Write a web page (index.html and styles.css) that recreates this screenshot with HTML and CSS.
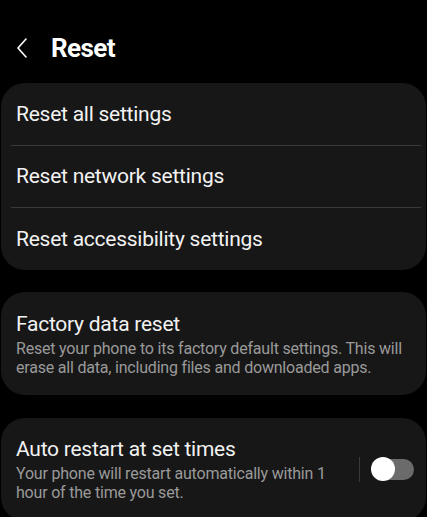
FILE: index.html
```html
<!DOCTYPE html>
<html>
<head>
<meta charset="utf-8">
<link rel="stylesheet" href="styles.css">
</head>
<body>
<header class="topbar">
  <svg class="back" width="12" height="20" viewBox="0 0 12 20"><path d="M10 1 L2 10 L10 19" fill="none" stroke="#fff" stroke-width="1.6" stroke-linecap="round" stroke-linejoin="round"/></svg>
  <h1 class="title">Reset</h1>
</header>
<section class="card">
  <div class="row simple">Reset all settings</div>
  <div class="divider"></div>
  <div class="row simple">Reset network settings</div>
  <div class="divider"></div>
  <div class="row simple">Reset accessibility settings</div>
</section>
<section class="card">
  <div class="row detail">
    <div class="row-title">Factory data reset</div>
    <div class="row-sub">Reset your phone to its factory default settings. This will erase all data, including files and downloaded apps.</div>
  </div>
</section>
<section class="card last">
  <div class="row detail switch-row">
    <div class="texts">
      <div class="row-title">Auto restart at set times</div>
      <div class="row-sub">Your phone will restart automatically within 1 hour of the time you set.</div>
    </div>
    <div class="vsep"></div>
    <div class="toggle"><div class="knob"></div></div>
  </div>
</section>
</body>
</html>
```
FILE: styles.css
```css
html, body {
  margin: 0;
  padding: 0;
  background: #000;
  color: #f2f2f2;
  font-family: Roboto, "Noto Sans", sans-serif;
  overflow: hidden;
}
.topbar {
  display: flex;
  align-items: center;
  height: 83px;
  padding-left: 16px;
  box-sizing: border-box;
  padding-top: 12px;
}
.back { margin-right: 23px; }
.title {
  margin: 0;
  font-size: 26px;
  font-weight: 700;
  letter-spacing: -0.6px;
  color: #fff;
}
.card {
  background: #171717;
  border-radius: 24px;
  margin: 0 1px 22.5px;
}
.row.simple {
  font-size: 21px;
  letter-spacing: -0.25px;
  padding: 0 15px;
  height: 61.5px;
  display: flex;
  align-items: center;
}
.divider {
  height: 1px;
  background: #3a3a3a;
  margin: 0 5px 0 10px;
}
.row.detail {
  padding: 18.5px 8px 18.5px 15px;
}
.row-title {
  font-size: 21px;
  line-height: 26px;
  letter-spacing: -0.25px;
}
.row-sub {
  font-size: 16px;
  line-height: 19px;
  letter-spacing: -0.2px;
  color: #9a9a9a;
  margin-top: 2px;
}
.row.detail.switch-row {
  display: flex;
  align-items: center;
  padding-right: 12px;
}
.texts { flex: 1; }
.vsep {
  width: 1px;
  height: 25px;
  background: #3a3a3a;
  margin: 0 13px 0 8px;
}
.toggle {
  width: 41px;
  height: 21px;
  border-radius: 11px;
  background: #6b6b6b;
  position: relative;
}
.knob {
  position: absolute;
  left: -2px;
  top: -1.5px;
  width: 24px;
  height: 24px;
  border-radius: 50%;
  background: #fff;
}
```
